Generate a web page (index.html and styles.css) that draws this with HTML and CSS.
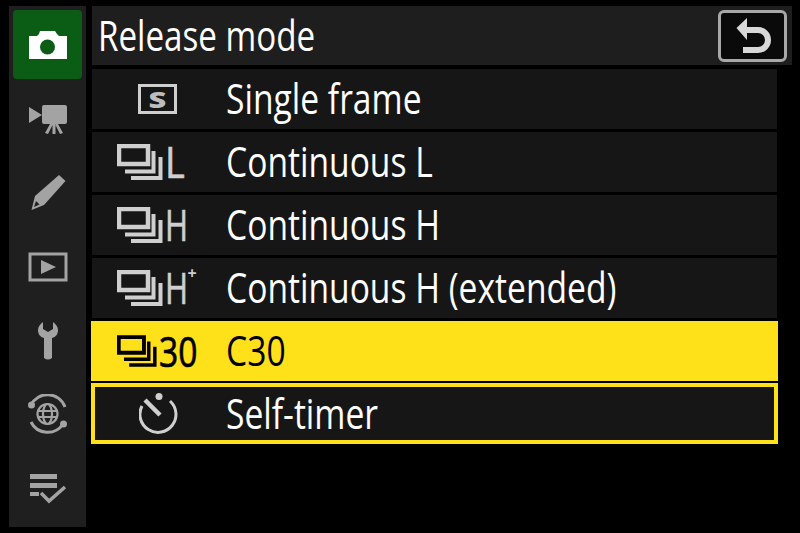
FILE: index.html
```html
<!DOCTYPE html>
<html lang="en">
<head>
  <meta charset="UTF-8">
  <title>Release mode</title>
  <link rel="stylesheet" href="styles.css">
</head>
<body>
  <div class="screen">
    <nav class="sidebar">
      <div class="tab active">
        <svg width="38" height="30" viewBox="0 0 38 30"><path fill="#fff" d="M0 6h8l2-2 1-3h15l2 3 2 2h8v23H0z"/><circle cx="18.500" cy="17" r="7.500" fill="#0b5c15"/></svg>
      </div>
      <div class="tab">
        <svg width="38" height="32" viewBox="0 0 38 32"><path fill="#a3a3a3" d="M0 4l13 8L0 20zM15 2h21q2 0 2 2v15q0 2-2 2H15q-2 0-2-2V4q0-2 2-2zM23.500 21h3v10h-3zM21 21h3l-5 10-3-1zM29 21h-3l5 10 3-1z"/></svg>
      </div>
      <div class="tab">
        <svg width="36" height="36" viewBox="0 0 36 36"><path fill="#a3a3a3" d="M29 0l6.500 6L14 30 1.500 35 5 21z"/><path fill="#1f1f1f" d="M4 32l2-6 3.500 3.500z"/></svg>
      </div>
      <div class="tab">
        <svg width="40" height="30" viewBox="0 0 40 30"><path fill="none" stroke="#a3a3a3" stroke-width="3" d="M2 2h36v26H2z"/><path fill="#a3a3a3" d="M13 8l15 7-15 7z"/></svg>
      </div>
      <div class="tab">
        <svg width="20" height="38" viewBox="0 0 20 38"><path fill="#a3a3a3" d="M5 0v7l5 3 5-3V0c3 2 5 5 5 8 0 4-2 7-6 8v20q-4 3-8 0V16C2 15 0 12 0 8c0-3 2-6 5-8z"/></svg>
      </div>
      <div class="tab">
        <svg width="42" height="42" viewBox="0 0 42 42"><g fill="none" stroke="#a3a3a3" stroke-width="3"><path d="M4 11A18.500 18.500 0 0 1 38 13M36 30A18.500 18.500 0 0 1 4 28"/></g><g fill="none" stroke="#a3a3a3" stroke-width="2.200"><circle cx="20.500" cy="20" r="10"/><ellipse cx="20.500" cy="20" rx="4.500" ry="10"/><path d="M11 17h19M11 23h19"/></g><circle cx="4.500" cy="11" r="3.500" fill="#a3a3a3"/><circle cx="36.500" cy="30" r="3.500" fill="#a3a3a3"/></svg>
      </div>
      <div class="tab">
        <svg width="38" height="30" viewBox="0 0 38 30"><path fill="#a3a3a3" d="M1 0h27v5H1zM1 9h27v5H1zM1 18h9v4H1z"/><path fill="none" stroke="#a3a3a3" stroke-width="3.500" d="M12 19l8 8 16-14"/></svg>
      </div>
    </nav>
    <main class="content">
      <header class="title-bar">
        <h1 class="title">Release mode</h1>
        <div class="back-btn">
          <svg width="36" height="40" viewBox="0 0 36 40"><path fill="none" stroke="#d8d8d8" stroke-width="6" d="M10 14h13a10 10 0 0 1 0 20H8"/><path fill="#d8d8d8" d="M1.500 12L12 2v22z"/></svg>
        </div>
      </header>
      <ul class="menu">
        <li class="row">
          <span class="row-icon row-icon-center">
            <span class="s-box"><span class="s-letter">S</span></span>
          </span>
          <span class="row-label">Single frame</span>
        </li>
        <li class="row">
          <span class="row-icon">
            <svg class="stack" width="46" height="36" viewBox="0 0 46 36"><path fill="none" stroke="currentColor" stroke-width="4.500" d="M2 2h29v18H2z"/><path fill="none" stroke="currentColor" stroke-width="4" d="M8 27.500h28.500V7M14 34h29.500V13"/></svg>
            <span class="suffix suffix-l">L</span>
          </span>
          <span class="row-label">Continuous L</span>
        </li>
        <li class="row">
          <span class="row-icon">
            <svg class="stack" width="46" height="36" viewBox="0 0 46 36"><path fill="none" stroke="currentColor" stroke-width="4.500" d="M2 2h29v18H2z"/><path fill="none" stroke="currentColor" stroke-width="4" d="M8 27.500h28.500V7M14 34h29.500V13"/></svg>
            <span class="suffix">H</span>
          </span>
          <span class="row-label">Continuous H</span>
        </li>
        <li class="row">
          <span class="row-icon">
            <svg class="stack" width="46" height="36" viewBox="0 0 46 36"><path fill="none" stroke="currentColor" stroke-width="4.500" d="M2 2h29v18H2z"/><path fill="none" stroke="currentColor" stroke-width="4" d="M8 27.500h28.500V7M14 34h29.500V13"/></svg>
            <span class="suffix">H</span><span class="plus">+</span>
          </span>
          <span class="row-label">Continuous H (extended)</span>
        </li>
        <li class="row row-active">
          <span class="row-icon">
            <svg class="stack" width="40" height="32" viewBox="0 0 46 36"><path fill="none" stroke="currentColor" stroke-width="4.500" d="M2 2h29v18H2z"/><path fill="none" stroke="currentColor" stroke-width="4" d="M8 27.500h28.500V7M14 34h29.500V13"/></svg>
            <span class="suffix suffix-num">30</span>
          </span>
          <span class="row-label">C30</span>
        </li>
        <li class="row row-focus">
          <span class="row-icon row-icon-center">
            <svg width="40" height="44" viewBox="0 0 40 44"><path fill="none" stroke="#cfcfcf" stroke-width="3" d="M3 14a18 18 0 1 0 28-5"/><path fill="none" stroke="#cfcfcf" stroke-width="4.500" d="M6 8l15 15"/><circle cx="20" cy="4.500" r="3.500" fill="#cfcfcf"/></svg>
          </span>
          <span class="row-label">Self-timer</span>
        </li>
      </ul>
    </main>
  </div>
</body>
</html>
```

FILE: styles.css
```css
body, html {
  margin: 0;
  padding: 0;
  width: 100%;
  height: 100%;
  background-color: #000;
  font-family: "Open Sans", sans-serif;
  color: #fff;
  overflow: hidden;
}
.screen {
  display: flex;
  gap: 6px;
  height: 521px;
  padding: 6px 8px 6px 9px;
}
/* Left tab column */
.sidebar {
  width: 69px;
  padding: 4px;
  background-color: #1f1f1f;
  display: flex;
  flex-direction: column;
  gap: 5px;
}
.tab {
  height: 69px;
  display: flex;
  align-items: center;
  justify-content: center;
  border-radius: 4px;
}
.tab.active {
  background-color: #0b5c15;
}
.content {
  flex: 1;
  display: flex;
  flex-direction: column;
}
.title-bar {
  height: 59px;
  background-color: #1e1e1e;
  display: flex;
  align-items: center;
  justify-content: space-between;
  padding: 0 5px 0 6px;
}
.title {
  margin: 0 0 3px;
  font-size: 42px;
  font-weight: 400;
  transform: scaleX(0.79);
  transform-origin: left center;
}
.back-btn {
  width: 69px;
  height: 52px;
  border: 3px solid #a8a8a8;
  border-radius: 6px;
  background-color: #0a0a0a;
  display: flex;
  align-items: center;
  justify-content: center;
  box-sizing: border-box;
}
.menu {
  list-style: none;
  margin: 4px 0 0;
  padding: 0;
  width: 685px;
}
.row {
  height: 60px;
  margin-bottom: 3px;
  background-color: #161616;
  display: flex;
  align-items: center;
}
.row-icon {
  width: 134px;
  box-sizing: border-box;
  padding-left: 25px;
  display: flex;
  align-items: center;
  color: #cfcfcf;
  flex-shrink: 0;
}
.row-icon-center {
  padding-left: 0;
  padding-right: 4px;
  justify-content: center;
}
.row-label {
  font-size: 42px;
  margin-bottom: 3px;
  transform: scaleX(0.8);
  transform-origin: left center;
  white-space: nowrap;
}
.stack {
  flex-shrink: 0;
}
.suffix {
  font-size: 44px;
  margin: 0 0 2px 2px;
  transform: scaleX(0.71);
  transform-origin: left center;
  -webkit-text-stroke: 0.7px currentColor;
}
.suffix-l {
  transform: scaleX(0.86);
}
.suffix-num {
  font-size: 42px;
  margin-left: 2px;
  transform: scaleX(0.8);
}
.plus {
  align-self: flex-start;
  font-size: 16px;
  font-weight: 700;
  line-height: 1;
  margin: 8px 0 0 -10px;
}
.s-box {
  width: 39px;
  height: 30px;
  border: 3px solid #cfcfcf;
  box-sizing: border-box;
  display: flex;
  align-items: center;
  justify-content: center;
  font-size: 22px;
  font-weight: 800;
  color: #bdbdbd;
}
.s-letter {
  transform: scaleX(1.4);
}
.row-active {
  margin: 0 -1px 2px;
  background-color: #ffe11a;
  color: #000;
}
.row-active .row-icon {
  color: #000;
  width: 135px;
  padding-left: 26px;
}
.row-focus {
  margin: 0 -1px;
  height: 61px;
  background-color: #161616;
  border: 4px solid #ffe11a;
  box-sizing: border-box;
}
.row-focus .row-icon {
  width: 131px;
}
```
